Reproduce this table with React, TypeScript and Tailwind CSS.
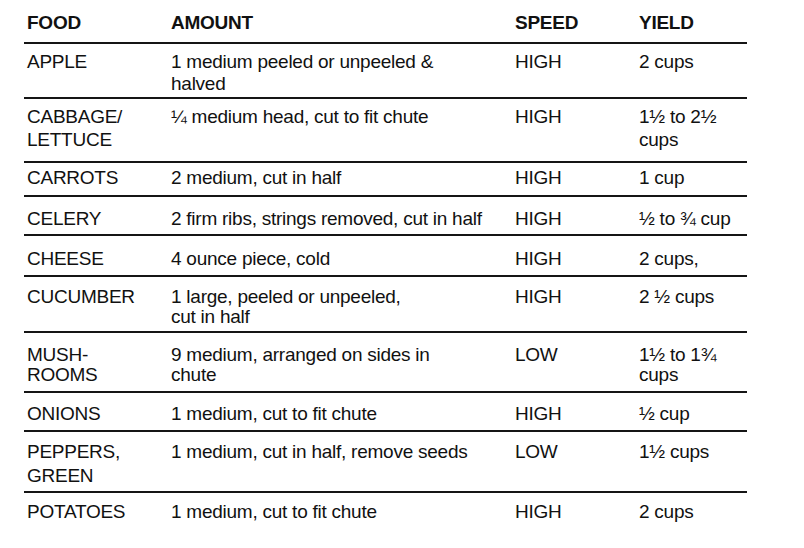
const rows = [
  { food: ["APPLE"], amount: ["1 medium peeled or unpeeled &", "halved"], speed: "HIGH", yld: ["2 cups"], cls: "h-[55px] pt-[7px] leading-[22px]" },
  { food: ["CABBAGE/", "LETTUCE"], amount: ["¼ medium head, cut to fit chute"], speed: "HIGH", yld: ["1½ to 2½", "cups"], cls: "h-[64px] pt-[6px] leading-[23px]" },
  { food: ["CARROTS"], amount: ["2 medium, cut in half"], speed: "HIGH", yld: ["1 cup"], cls: "h-[34px] pt-[4px] leading-[21px]" },
  { food: ["CELERY"], amount: ["2 firm ribs, strings removed, cut in half"], speed: "HIGH", yld: ["½ to ¾ cup"], cls: "h-[39px] pt-[11px] leading-[21px]" },
  { food: ["CHEESE"], amount: ["4 ounce piece, cold"], speed: "HIGH", yld: ["2 cups,"], cls: "h-[41px] pt-[12px] leading-[21px]" },
  { food: ["CUCUMBER"], amount: ["1 large, peeled or unpeeled,", "cut in half"], speed: "HIGH", yld: ["2 ½ cups"], cls: "h-[56px] pt-[10px] leading-[20px]" },
  { food: ["MUSH-", "ROOMS"], amount: ["9 medium, arranged on sides in", "chute"], speed: "LOW", yld: ["1½ to 1¾", "cups"], cls: "h-[60px] pt-[12px] leading-[20px]" },
  { food: ["ONIONS"], amount: ["1 medium, cut to fit chute"], speed: "HIGH", yld: ["½ cup"], cls: "h-[39px] pt-[10px] leading-[21px]" },
  { food: ["PEPPERS,", "GREEN"], amount: ["1 medium, cut in half, remove seeds"], speed: "LOW", yld: ["1½ cups"], cls: "h-[61px] pt-[8px] leading-[24px]" },
  { food: ["POTATOES"], amount: ["1 medium, cut to fit chute"], speed: "HIGH", yld: ["2 cups"], cls: "h-[55px] pt-[8px] leading-[21px]" },
];

const Lines = ({ items }: { items: string[] }) => (
  <div>
    {items.map((t, i) => (
      <div key={i} className="whitespace-nowrap">
        {t}
      </div>
    ))}
  </div>
);

export default function App() {
  return (
    <div className="w-[804px] h-[548px] overflow-hidden bg-white text-[#111] text-[19px] tracking-[-0.25px] font-['Liberation_Sans',Arial,sans-serif]">
      <div className="ml-[24px] w-[723px] pt-[12px]">
        {/* header */}
        <div className="grid grid-cols-[144px_344px_124px_1fr] pl-[3px] h-[30px] leading-[21px] font-bold">
          <div>FOOD</div>
          <div>AMOUNT</div>
          <div>SPEED</div>
          <div>YIELD</div>
        </div>

        {rows.map((r, i) => (
          <div
            key={i}
            className={`grid grid-cols-[144px_344px_124px_1fr] pl-[3px] border-t-2 border-[#151515] ${r.cls}`}
          >
            <Lines items={r.food} />
            <Lines items={r.amount} />
            <div>{r.speed}</div>
            <Lines items={r.yld} />
          </div>
        ))}
      </div>
    </div>
  );
}
